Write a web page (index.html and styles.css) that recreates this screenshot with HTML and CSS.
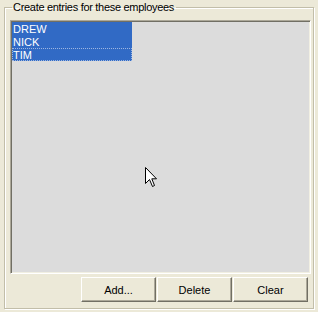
FILE: index.html
```html
<!DOCTYPE html>
<html>
<head>
<meta charset="utf-8">
<link rel="stylesheet" href="styles.css">
</head>
<body>
<fieldset class="group">
  <legend class="group-title">Create entries for these employees</legend>
  <div class="listbox">
    <div class="item selected">DREW</div>
    <div class="item selected">NICK</div>
    <div class="item selected focused">TIM</div>
  </div>
  <div class="actions">
    <button class="btn">Add...</button>
    <button class="btn">Delete</button>
    <button class="btn">Clear</button>
  </div>
</fieldset>
<svg class="cursor" width="13" height="21" viewBox="0 0 13 21">
  <path d="M0.5 0.5 L0.5 16.5 L4.5 12.5 L7.5 19.5 L9.5 18.5 L6.8 11.8 L11.5 11.8 Z" fill="#fff" stroke="#000" stroke-width="1"/>
</svg>
</body>
</html>
```
FILE: styles.css
```css
html, body {
  margin: 0;
  padding: 0;
  background: #ece9d8;
  width: 318px;
  height: 312px;
  overflow: hidden;
  font-family: "Liberation Sans", Arial, sans-serif;
  font-size: 11px;
  color: #000;
}
body {
  padding-top: 1px;
  box-sizing: border-box;
  position: relative;
}
.group {
  margin: 0 0 0 4px;
  width: 310px;
  height: 308px;
  box-sizing: border-box;
  border: 1px solid #c2bea9;
  box-shadow: 1px 1px 0 #fff, inset 1px 1px 0 #fff;
  padding: 6px 1px 6px 5px;
  display: flex;
  flex-direction: column;
  min-width: 0;
}
.group-title {
  line-height: 13px;
  height: 13px;
  padding: 0 2px 0 1px;
  margin-left: 2px;
  font-size: 11px;
  letter-spacing: -0.3px;
}
.listbox {
  height: 255px;
  box-sizing: border-box;
  margin-right: 1px;
  background: #dcdcdc;
  border: 1px solid;
  border-color: #aca899 #fff #fff #aca899;
  box-shadow: inset 1px 1px 0 #716f64, inset -1px -1px 0 #f1efe2;
  padding: 1px;
}
.item {
  width: 120px;
  height: 13px;
  line-height: 14px;
  padding-left: 1px;
  box-sizing: border-box;
}
.selected {
  background: #316ac5;
  color: #fff;
}
.focused {
  outline: 1px dotted #9db6e0;
  outline-offset: -1px;
}
.actions {
  display: flex;
  justify-content: flex-end;
  gap: 1px;
  margin-top: 3px;
  margin-right: 4px;
}
.btn {
  width: 75px;
  height: 25px;
  box-sizing: border-box;
  margin: 0;
  padding: 0;
  background: #ece9d8;
  font-family: "Liberation Sans", Arial, sans-serif;
  font-size: 11px;
  color: #000;
  border: 1px solid;
  border-color: #fff #716f64 #716f64 #fff;
  box-shadow: inset -1px -1px 0 #aca899;
}
.cursor {
  position: absolute;
  left: 145px;
  top: 167px;
}
```
